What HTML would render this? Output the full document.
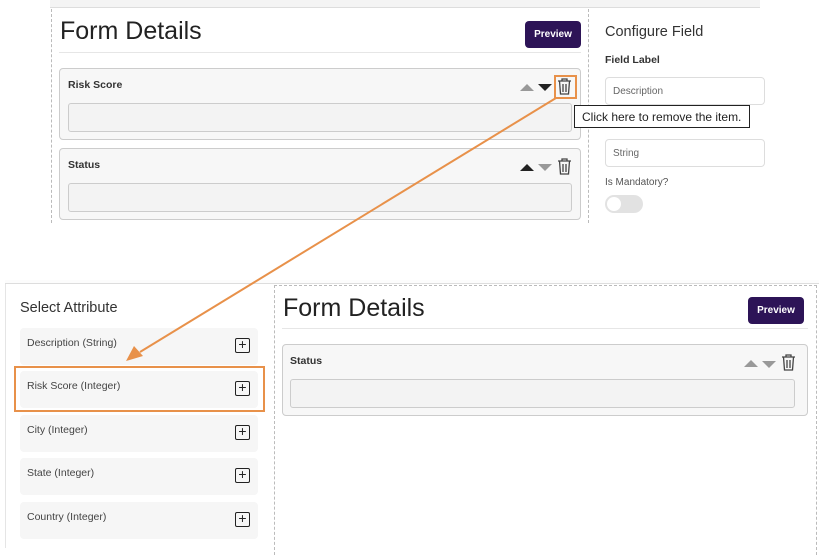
<!DOCTYPE html>
<html><head><style>
*{box-sizing:border-box;margin:0;padding:0}
body{width:819px;height:548px;background:#fff;position:relative;overflow:hidden;font-family:"Liberation Sans",sans-serif;color:#333}
.a{position:absolute}
.h1{font-size:25px;color:#222}
.btn{background:#2d1457;color:#fff;font-size:10px;font-weight:bold;border-radius:4px;display:flex;align-items:center;justify-content:center}
.card{background:#f7f7f7;border:1px solid #ccc;border-radius:4px}
.inp{background:#f3f3f3;border:1px solid #ccc;border-radius:3px}
.lbl{font-size:10.5px;font-weight:bold;color:#333}
.item{background:#f6f6f6;border-radius:4px;font-size:10.5px;color:#444;padding:9px 7px}
.plus{position:absolute;right:8px;top:10px;width:15px;height:15px;border:1.5px solid #222;border-radius:2px;font-size:14px;line-height:11px;text-align:center;color:#222}
</style></head><body>
<!-- top section -->
<div class="a" style="left:50px;top:0;width:710px;height:8px;background:#f4f4f4;border-bottom:1px solid #ddd"></div>
<div class="a" style="left:51px;top:9px;width:538px;height:214px;border-left:1px dashed #bbb;border-right:1px dashed #bbb"></div>
<div class="a h1" style="left:60px;top:17px">Form Details</div>
<div class="a btn" style="left:525px;top:21px;width:56px;height:27px">Preview</div>
<div class="a" style="left:59px;top:52px;width:522px;height:1px;background:#e6e6e6"></div>
<div class="a card" style="left:59px;top:68px;width:522px;height:72px"></div>
<div class="a lbl" style="left:68px;top:79px">Risk Score</div>
<div class="a inp" style="left:68px;top:103px;width:504px;height:29px"></div>
<div class="a card" style="left:59px;top:148px;width:522px;height:72px"></div>
<div class="a lbl" style="left:68px;top:159px">Status</div>
<div class="a inp" style="left:68px;top:183px;width:504px;height:29px"></div>
<div class="a" style="left:605px;top:24px;font-size:14.5px;color:#333">Configure Field</div>
<div class="a lbl" style="left:605px;top:54px">Field Label</div>
<div class="a" style="left:605px;top:77px;width:160px;height:28px;border:1px solid #ddd;border-radius:4px;font-size:10px;color:#666;padding:8px 7px">Description</div>
<div class="a" style="left:605px;top:139px;width:160px;height:28px;border:1px solid #ddd;border-radius:4px;font-size:10px;color:#666;padding:8px 7px">String</div>
<div class="a" style="left:605px;top:177px;font-size:10px;color:#555">Is Mandatory?</div>
<div class="a" style="left:605px;top:195px;width:38px;height:18px;border-radius:9px;background:#e2e2e2"><div class="a" style="left:2px;top:2px;width:14px;height:14px;border-radius:7px;background:#fff"></div></div>
<div class="a" style="left:574px;top:105px;width:176px;height:23px;border:1px solid #222;background:#fff;color:#222;padding:4px 7px;font-size:12px;white-space:nowrap;overflow:hidden">Click here to remove the item.</div>
<div class="a" style="left:817px;top:0;width:2px;height:548px;background:#fff"></div>
<!-- bottom section -->
<div class="a" style="left:5px;top:280px;width:814px;height:4px;border-bottom:1px solid #ddd;background:#fcfcfc"></div>
<div class="a" style="left:5px;top:284px;width:1px;height:264px;background:#e5e5e5"></div>
<div class="a" style="left:20px;top:300px;font-size:14.5px;color:#333">Select Attribute</div>
<div class="a item" style="left:20px;top:328px;width:238px;height:37px">Description (String)<div class="plus">+</div></div>
<div class="a item" style="left:20px;top:371px;width:238px;height:37px">Risk Score (Integer)<div class="plus">+</div></div>
<div class="a item" style="left:20px;top:415px;width:238px;height:37px">City (Integer)<div class="plus">+</div></div>
<div class="a item" style="left:20px;top:458px;width:238px;height:37px">State (Integer)<div class="plus">+</div></div>
<div class="a item" style="left:20px;top:502px;width:238px;height:37px">Country (Integer)<div class="plus">+</div></div>
<div class="a" style="left:14px;top:366px;width:251px;height:46px;border:2px solid #e8914a"></div>
<div class="a" style="left:274px;top:285px;width:543px;height:270px;border-left:1px dashed #bbb;border-right:1px dashed #bbb;border-top:1px dashed #bbb"></div>
<div class="a h1" style="left:283px;top:294px">Form Details</div>
<div class="a btn" style="left:748px;top:297px;width:56px;height:27px">Preview</div>
<div class="a" style="left:282px;top:328px;width:526px;height:1px;background:#e6e6e6"></div>
<div class="a card" style="left:282px;top:344px;width:526px;height:72px"></div>
<div class="a lbl" style="left:290px;top:355px">Status</div>
<div class="a inp" style="left:290px;top:379px;width:505px;height:29px"></div>
<svg class="a" style="left:0;top:0" width="819" height="548">
<g fill="#999"><path d="M520 91l7-7 7 7z"/><path d="M744 367l7-7 7 7z"/><path d="M762 361h14l-7 7z"/><path d="M538 164h14l-7 7z"/></g>
<g fill="#222"><path d="M538 84h14l-7 7z"/><path d="M520 171l7-7 7 7z"/></g>
<g fill="none" stroke="#444" stroke-width="1.3">
<path d="M558 81h13M562 81v-2h5v2M559.5 81l1 13h8l1-13M563 84v8M566 84v8"/>
<g transform="translate(0,80)"><path d="M558 81h13M562 81v-2h5v2M559.5 81l1 13h8l1-13M563 84v8M566 84v8"/></g>
<g transform="translate(224,276)"><path d="M558 81h13M562 81v-2h5v2M559.5 81l1 13h8l1-13M563 84v8M566 84v8"/></g>
</g>
<rect x="555" y="76" width="21" height="22" fill="none" stroke="#e8914a" stroke-width="2"/>
<line x1="556" y1="98" x2="140" y2="352" stroke="#e8914a" stroke-width="2"/>
<path d="M126 361l8-15 9 10z" fill="#e8914a"/>
</svg>
</body></html>
